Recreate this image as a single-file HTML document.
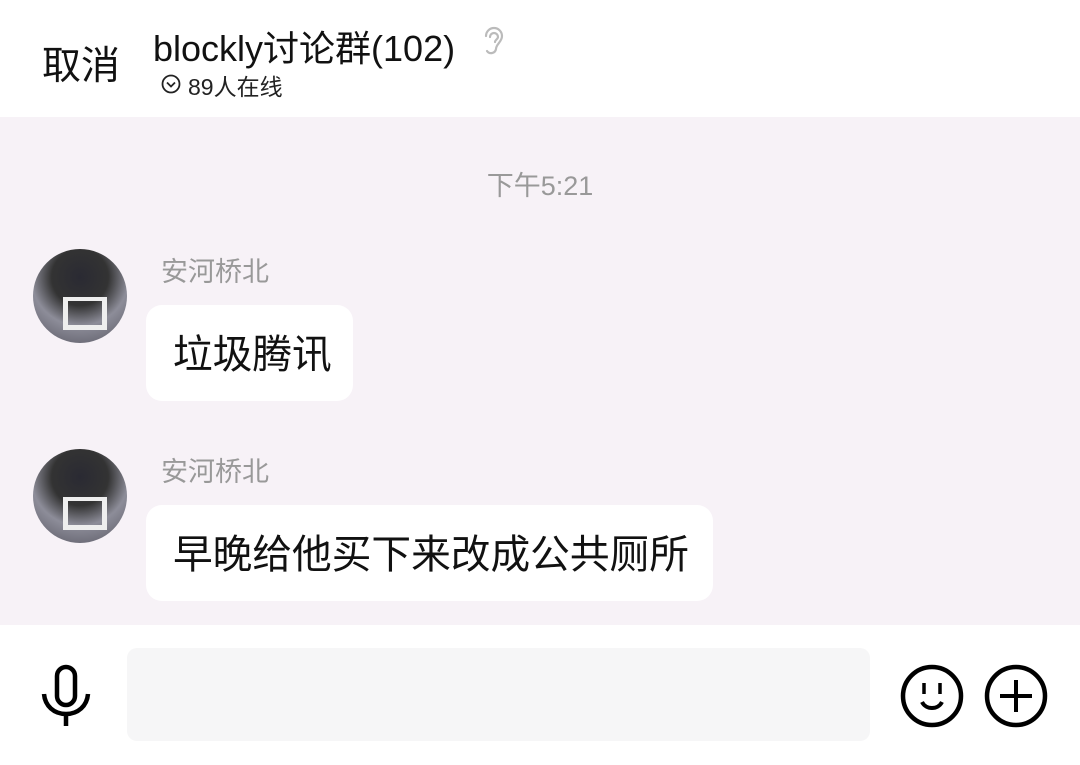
<!DOCTYPE html>
<html><head><meta charset="utf-8"><style>
*{margin:0;padding:0;box-sizing:border-box}
body{width:1080px;height:765px;overflow:hidden;background:#fff;font-family:"Liberation Sans","Noto Sans CJK SC",sans-serif;position:relative}
.a{position:absolute}
.chat{left:0;top:117px;width:1080px;height:508px;background:#f7f2f7}
.name{font-size:27px;color:#999;left:161px}
.bub{background:#fff;border-radius:16px;height:96px;left:146px;font-size:39.7px;color:#111;line-height:100px;padding-left:27px}
.av{left:33px;width:94px;height:94px;border-radius:50%;background:radial-gradient(circle at 50% 30%,#2a2a33 0,#333 35%,#8d8d99 60%,#55545f 100%);overflow:hidden}
.av:after{content:"";position:absolute;left:30px;top:48px;width:34px;height:24px;border:5px solid #eee;border-top-width:4px}
</style></head><body>
<div class="a" style="left:42px;top:35px;font-size:39px;color:#111">取消</div>
<div class="a" style="left:153px;top:20px;font-size:36px;color:#111">blockly讨论群(102)</div>
<svg class="a" style="left:478px;top:24px" width="30" height="34" viewBox="0 0 30 34"><path d="M8 12a8 8 0 0 1 16 0c0 6-6 8-6 13a5 5 0 0 1-9 2M12 13a4 4 0 0 1 8 0c0 2-3 3-3 5" fill="none" stroke="#bbb" stroke-width="2.2" stroke-linecap="round"/></svg>
<svg class="a" style="left:160px;top:73px" width="22" height="22" viewBox="0 0 22 22"><circle cx="11" cy="11" r="8.5" fill="none" stroke="#222" stroke-width="1.8"/><path d="M7 9.5l4 4 4-4" fill="none" stroke="#222" stroke-width="1.8"/></svg>
<div class="a" style="left:188px;top:68px;font-size:23px;color:#222">89人在线</div>
<div class="a chat"></div>
<div class="a" style="left:0;width:1080px;text-align:center;top:164px;font-size:27px;color:#999">下午5:21</div>
<div class="a av" style="top:249px"></div>
<div class="a name" style="top:250px">安河桥北</div>
<div class="a bub" style="top:305px;width:207px">垃圾腾讯</div>
<div class="a av" style="top:449px"></div>
<div class="a name" style="top:450px">安河桥北</div>
<div class="a bub" style="top:505px;width:567px">早晚给他买下来改成公共厕所</div>
<div class="a" style="left:127px;top:648px;width:743px;height:93px;background:#f6f6f7;border-radius:10px"></div>
<svg class="a" style="left:40px;top:664px" width="54" height="64" viewBox="0 0 54 64"><rect x="17" y="3" width="18" height="38" rx="9" fill="none" stroke="#000" stroke-width="4.5"/><path d="M4 30c1 12 10 20 22 20s21-8 22-20M26 50v12" fill="none" stroke="#000" stroke-width="4.5"/></svg>
<svg class="a" style="left:900px;top:664px" width="64" height="64" viewBox="0 0 64 64"><circle cx="32" cy="32" r="29" fill="none" stroke="#000" stroke-width="4.5"/><path d="M24 19v11M40 19v11" stroke="#000" stroke-width="3.5"/><path d="M22 38c4 8 16 8 20 0" fill="none" stroke="#000" stroke-width="4"/></svg>
<svg class="a" style="left:984px;top:664px" width="64" height="64" viewBox="0 0 64 64"><circle cx="32" cy="32" r="29" fill="none" stroke="#000" stroke-width="4.5"/><path d="M32 16v32M16 32h32" stroke="#000" stroke-width="4"/></svg>
</body></html>
